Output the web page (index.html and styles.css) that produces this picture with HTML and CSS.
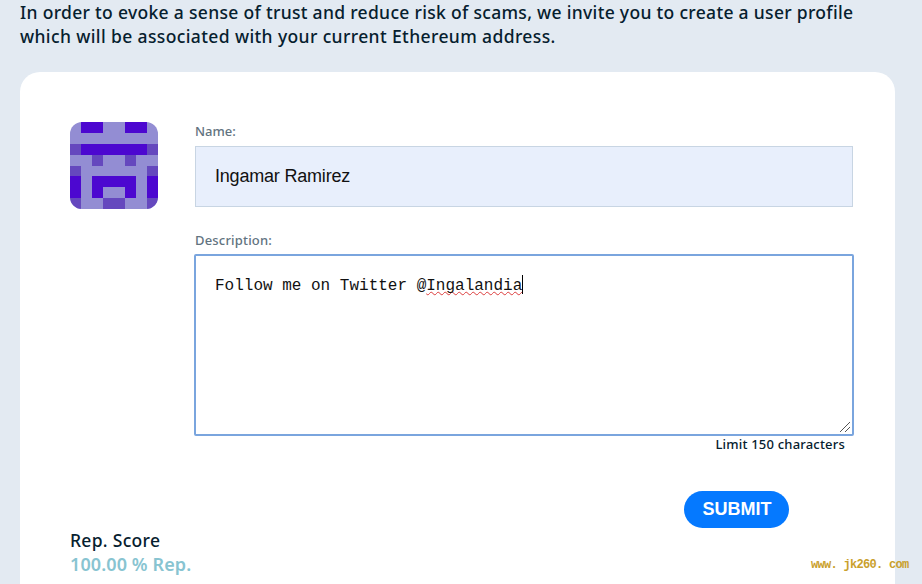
FILE: index.html
```
<!DOCTYPE html>
<html lang="en">
<head>
    <meta charset="UTF-8">
    <meta name="viewport" content="width=device-width, initial-scale=1.0">
    <title>User Profile</title>
    <link rel="stylesheet" href="styles.css">
</head>
<body>
    <p class="intro"><span class="intro-first">In order to evoke a sense of trust and reduce risk of scams, we invite you to create a user profile</span><br><span class="intro-second">which will be associated with your current Ethereum address.</span></p>

    <main class="card">
        <div class="profile">
            <svg class="identicon" viewBox="0 0 8 8" preserveAspectRatio="none" shape-rendering="crispEdges">
                <rect width="8" height="8" fill="#938dd3"/>
                <path fill="#4c07d0" d="M1 0h2v1H1zM5 0h2v1H5zM1 2h6v1H1zM0 5h1v2H0zM7 5h1v2H7zM2 5h4v2H5V6H3v1H2z"/>
                <path fill="#6548be" d="M0 2h1v1H0zM7 2h1v1H7zM2 3h1v1H2zM5 3h1v1H5zM0 4h1v1H0zM7 4h1v1H7zM0 7h1v1H0zM3 7h2v1H3zM7 7h1v1H7z"/>
            </svg>

            <form class="fields">
                <label class="label label-name" for="name">Name:</label>
                <input class="name-input" id="name" type="text" value="Ingamar Ramirez">

                <div class="label label-description">Description:</div>
                <div class="description" role="textbox" aria-multiline="true">
                    <span class="description-text">Follow me on Twitter @<span class="misspelled">Ingalandia</span></span><span class="caret"></span>
                    <svg class="resize-handle" viewBox="0 0 12 12"><path d="M1 11L11 1M6 11L11 6" stroke="#555" fill="none"/></svg>
                </div>
                <div class="limit"><span>Limit 150 characters</span></div>
                <button class="submit" type="button">SUBMIT</button>
            </form>
        </div>

        <div class="reputation">
            <div class="rep-title"><span>Rep. Score</span></div>
            <div class="rep-value"><span>100.00 % Rep.</span></div>
        </div>
    </main>

    <div class="watermark">www. jk260. com</div>
</body>
</html>
```

FILE: styles.css
```
:root {
  --page: #e3eaf2;
  --ink: #06202e;
  --blue: #0579ff;
  --teal: #88c4d1;
}

* { box-sizing: border-box; }

body {
  margin: 0;
  height: 584px;
  overflow: hidden;
  background: var(--page);
  color: var(--ink);
  font-family: "Noto Sans", sans-serif;
  font-weight: 500;
}

.intro {
  margin: 0;
  padding: 0 0 0 20px;
  height: 72px;
  font-size: 17.5px;
  line-height: 24px;
  white-space: nowrap;
}

.intro-first { letter-spacing: 0.31px; }

.intro-second { letter-spacing: 0.38px; }

.card {
  width: 875px;
  height: 540px;
  margin-left: 20px;
  padding: 50px 42px 0 50px;
  background: #fff;
  border-radius: 20px;
}

.profile {
  display: flex;
  gap: 37px;
}

.identicon {
  flex: none;
  width: 88px;
  height: 87px;
  border-radius: 12px;
}

.fields {
  width: 658px;
  display: flex;
  flex-direction: column;
}

.label {
  color: #627380;
  font-size: 13px;
  line-height: 18px;
}

.label-name { margin-bottom: 6px; }

.label-description {
  margin: 24px 0 5px;
  letter-spacing: 0.18px;
}

.name-input {
  height: 61px;
  padding: 0 19px 1px;
  border: 1px solid #c8d5e3;
  border-radius: 0;
  outline: none;
  background: #e8effc;
  color: #111;
  font-family: "Liberation Sans", Arial, sans-serif;
  font-size: 18px;
  letter-spacing: -0.2px;
}

.description {
  position: relative;
  display: flex;
  align-items: flex-start;
  width: 660px;
  height: 182px;
  margin-left: -1px;
  padding: 18px 19px 0;
  border: 2px solid #7aa5de;
  border-radius: 2px;
  color: #111;
  font-family: "Liberation Mono", monospace;
  font-size: 16px;
  font-weight: 400;
  line-height: 24px;
}

.misspelled {
  text-decoration: underline wavy #dc3c3c 1px;
  text-decoration-skip-ink: none;
  text-underline-offset: 1px;
}

.caret {
  width: 1px;
  height: 19px;
  margin-top: 1px;
  background: #000;
}

.resize-handle {
  position: absolute;
  right: 1px;
  bottom: 1px;
  width: 12px;
  height: 12px;
}

.limit {
  margin-top: -1px;
  padding-right: 8px;
  font-size: 13px;
  line-height: 18px;
  letter-spacing: 0.2px;
  text-align: right;
}

.submit {
  align-self: flex-end;
  width: 105px;
  height: 37px;
  margin: 38px 64px 0 0;
  padding: 0 0 1px 1px;
  border: none;
  border-radius: 19px;
  background: var(--blue);
  color: #fff;
  font-family: "Liberation Sans", Arial, sans-serif;
  font-size: 18px;
  font-weight: 700;
}

.reputation {
  font-size: 17.5px;
  line-height: 24px;
}

.rep-title { letter-spacing: 0.3px; }

.rep-value {
  color: var(--teal);
  font-size: 18px;
  font-weight: 600;
  letter-spacing: 0.1px;
}

.watermark {
  position: absolute;
  left: 811px;
  top: 557px;
  color: #c9a02c;
  font-family: "Liberation Mono", monospace;
  font-size: 12px;
  font-weight: 700;
  line-height: 16px;
  letter-spacing: -0.7px;
  white-space: pre;
}
```
